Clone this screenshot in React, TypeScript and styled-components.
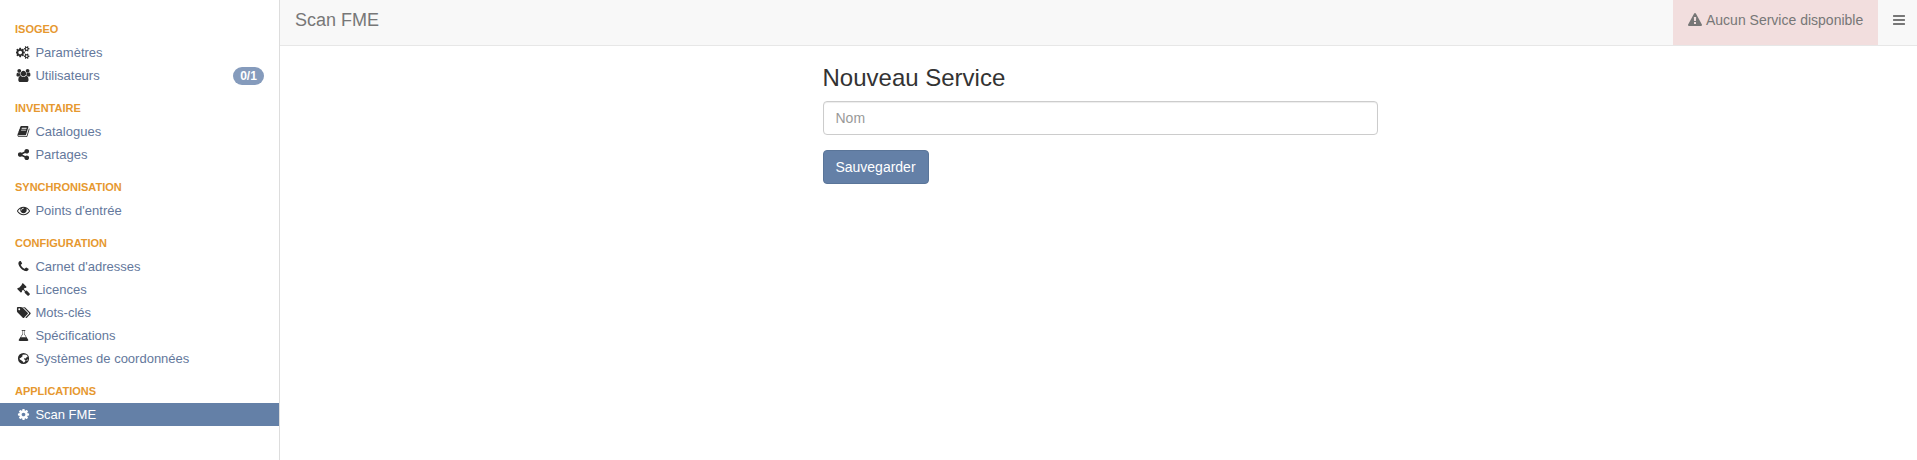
import React from "react";
import styled, { createGlobalStyle } from "styled-components";

const GlobalStyle = createGlobalStyle`
  *, *::before, *::after { box-sizing: border-box; }
  body {
    margin: 0;
    background: #fff;
    color: #333;
    font-family: "Liberation Sans", Arial, sans-serif;
    font-size: 14px;
    line-height: 20px;
  }
`;

const SMALL_GEAR =
  "v140q0 16-149 31-12 27-30 52 51 113 51 138 0 4-4 7-122 71-124 71-8 0-46-47t-52-68q-20 2-30 2t-30-2q-14 21-52 68t-46 47q-2 0-124-71-4-3-4-7 0-25 51-138-18-25-30-52-149-15-149-31v-140q0-16 149-31 13-29 30-52-51-113-51-138 0-4 4-7 4-2 35-20t59-34 30-16q8 0 46 46.5t52 67.5q20-2 30-2t30 2q51-71 92-112l6-2q4 0 124 70 4 3 4 7 0 25-51 138 17 23 30 52 149 15 149 31z";

const ICONS = {
  cogs: {
    width: 1920,
    d:
      "M832 896q0-106-75-181t-181-75-181 75-75 181 75 181 181 75 181-75 75-181zm768 512q0-52-38-90t-90-38-90 38-38 90q0 53 37.5 90.5t90.5 37.5 90.5-37.5 37.5-90.5zm0-1024q0-52-38-90t-90-38-90 38-38 90q0 53 37.5 90.5t90.5 37.5 90.5-37.5 37.5-90.5zm-384 421v185q0 10-7 19.5t-16 10.5l-155 24q-11 35-32 76 34 48 90 115 7 11 7 20 0 12-7 19-23 30-82.5 89.5t-78.5 59.5q-11 0-21-7l-115-90q-37 19-77 31-11 108-23 155-7 24-30 24h-186q-11 0-20-7.5t-10-17.5l-23-153q-34-10-75-31l-118 89q-7 7-20 7-11 0-21-8-144-133-144-160 0-9 7-19 10-14 41-53t47-61q-23-44-35-82l-152-24q-10-1-17-9.5t-7-19.5v-185q0-10 7-19.5t16-10.5l155-24q11-35 32-76-34-48-90-115-7-11-7-20 0-12 7-20 22-30 82-89t79-59q11 0 21 7l115 90q34-18 77-32 11-108 23-154 7-24 30-24h186q11 0 20 7.5t10 17.5l23 153q34 10 75 31l118-89q8-7 20-7 11 0 21 8 144 133 144 160 0 8-7 19-12 16-42 54t-45 60q23 48 34 82l152 23q10 2 17 10.5t7 19.5z" +
      "M1856 1338" + SMALL_GEAR + "M1856 314" + SMALL_GEAR,
  },
  users: {
    width: 2048,
    d: "M657 896q-162 5-265 128h-134q-82 0-138-40.5t-56-118.5q0-353 124-353 6 0 43.5 21t97.5 42.5 119 21.5q67 0 133-23-5 37-5 66 0 159 90 294zm1071 637q0 120-73 189.5t-194 69.5h-874q-121 0-194-69.5t-73-189.5q0-53 3.5-103.5t14-109 26.5-108.5 43-97.5 62-81 85.5-53.5 111.5-20q10 0 43 21.5t73 48 107 48 135 21.5 135-21.5 107-48 73-48 43-21.5q61 0 111.5 20t85.5 53.5 62 81 43 97.5 26.5 108.5 14 109 3.5 103.5zm-1024-1277q0 106-75 181t-181 75-181-75-75-181 75-181 181-75 181 75 75 181zm704 384q0 159-112.5 271.5t-271.5 112.5-271.5-112.5-112.5-271.5 112.5-271.5 271.5-112.5 271.5 112.5 112.5 271.5zm576 225q0 78-56 118.5t-138 40.5h-134q-103-123-265-128 90-135 90-294 0-29-5-66 66 23 133 23 59 0 119-21.5t97.5-42.5 43.5-21q124 0 124 353zm-128-609q0 106-75 181t-181 75-181-75-75-181 75-181 181-75 181 75 75 181z",
  },
  book: {
    width: 1792,
    d: "M1703 478q40 57 18 129l-275 906q-19 64-76.5 107.5t-122.5 43.5h-923q-77 0-148.5-53.5t-99.5-131.5q-24-67-2-127 0-4 3-27t4-37q1-8-3-21.5t-3-19.5q2-11 8-21t16.5-23.5 16.5-23.5q23-38 45-91.5t30-91.5q3-10 .5-30t-.5-28q3-11 17-28t17-23q21-36 42-92t25-90q1-9-2.5-32t.5-28q4-13 22-30.5t22-22.5q19-26 42.5-84.5t27.5-96.5q1-8-3-25.5t-2-26.5q2-8 9-18t18-23 17-21q8-12 16.5-30.5t15-35 16-36 19.5-32 26.5-23.5 36-11.5 47.5 5.5l-1 3q38-9 51-9h761q74 0 114 56t18 130l-274 906q-36 119-71.5 153.5t-128.5 34.5h-869q-27 0-38 15-11 16-1 43 24 70 144 70h923q29 0 56-15.5t35-41.5l300-987q7-22 5-57 38 15 59 43zm-1064 2q-4 13 2 22.5t20 9.5h608q13 0 25.5-9.5t16.5-22.5l21-64q4-13-2-22.5t-20-9.5h-608q-13 0-25.5 9.5t-16.5 22.5zm-83 256q-4 13 2 22.5t20 9.5h608q13 0 25.5-9.5t16.5-22.5l21-64q4-13-2-22.5t-20-9.5h-608q-13 0-25.5 9.5t-16.5 22.5z",
  },
  share: {
    width: 1792,
    d: "M1344 1024q133 0 226.5 93.5t93.5 226.5-93.5 226.5-226.5 93.5-226.5-93.5-93.5-226.5q0-12 2-34l-360-180q-92 86-218 86-133 0-226.5-93.5t-93.5-226.5 93.5-226.5 226.5-93.5q126 0 218 86l360-180q-2-22-2-34 0-133 93.5-226.5t226.5-93.5 226.5 93.5 93.5 226.5-93.5 226.5-226.5 93.5q-126 0-218-86l-360 180q2 22 2 34t-2 34l360 180q92-86 218-86z",
  },
  eye: {
    width: 1792,
    d: "M1664 960q-152-236-381-353 61 104 61 225 0 185-131.5 316.5t-316.5 131.5-316.5-131.5-131.5-316.5q0-121 61-225-229 117-381 353 133 205 333.5 326.5t434.5 121.5 434.5-121.5 333.5-326.5zm-720-384q0-20-14-34t-34-14q-125 0-214.5 89.5t-89.5 214.5q0 20 14 34t34 14 34-14 14-34q0-86 61-147t147-61q20 0 34-14t14-34zm848 384q0 34-20 69-140 230-376.5 368.5t-499.5 138.5-499.5-139-376.5-368q-20-35-20-69t20-69q140-229 376.5-368t499.5-139 499.5 139 376.5 368q20 35 20 69z",
  },
  phone: {
    width: 1792,
    d: "M1600 1240q0 27-10 70.5t-21 68.5q-21 50-122 106-94 51-186 51-27 0-53-3.5t-57.5-12.5-47-14.5-55.5-20.5-49-18q-98-35-175-83-127-79-264-216t-216-264q-48-77-83-175-3-9-18-49t-20.5-55.5-14.5-47-12.5-57.5-3.5-53q0-92 51-186 56-101 106-122 25-11 68.5-21t70.5-10q14 0 21 3 18 6 53 76 11 19 30 54t35 63.5 31 53.5q3 4 17.5 25t21.5 35.5 7 28.5q0 20-28.5 50t-62 55-62 53-28.5 46q0 9 5 22.5t8.5 20.5 14 24 11.5 19q76 137 174 235t235 174q2 1 19 11.5t24 14 20.5 8.5 22.5 5q18 0 46-28.5t53-62 55-62 50-28.5q14 0 28.5 7t35.5 21.5 25 17.5q25 15 53.5 31t63.5 35 54 30q70 35 76 53 3 7 3 21z",
  },
  gavel: {
    width: 1792,
    d: "M1771 1536q0 53-37 90l-107 108q-39 37-91 37-53 0-90-37l-363-364q-38-36-38-90 0-53 43-96l-256-256-126 126q-14 14-34 14t-34-14q2 2 12.5 12t12.5 13 10 11.5 10 13.5 6 13.5 5.5 16.5 1.5 18q0 38-28 68-3 3-16.5 18t-19 20.5-18.5 16.5-22 15.5-22 9-26 4.5q-40 0-68-28l-408-408q-28-28-28-68 0-13 4.5-26t9-22 15.5-22 16.5-18.5 20.5-19 18-16.5q30-28 68-28 10 0 18 1.5t16.5 5.5 13.5 6 13.5 10 11.5 10 13 12.5 12 12.5q-14-14-14-34t14-34l348-348q14-14 34-14t34 14q-2-2-12.5-12t-12.5-13-10-11.5-10-13.5-6-13.5-5.5-16.5-1.5-18q0-38 28-68 3-3 16.5-18t19-20.5 18.5-16.5 22-15.5 22-9 26-4.5q40 0 68 28l408 408q28 28 28 68 0 13-4.5 26t-9 22-15.5 22-16.5 18.5-20.5 19-18 16.5q-30 28-68 28-10 0-18-1.5t-16.5-5.5-13.5-6-13.5-10-11.5-10-13-12.5-12-12.5q14 14 14 34t-14 34l-126 126 256 256q43-43 96-43 52 0 91 37l363 363q37 39 37 91z",
  },
  tags: {
    width: 2048,
    d: "M576 448q0-53-37.5-90.5t-90.5-37.5-90.5 37.5-37.5 90.5 37.5 90.5 90.5 37.5 90.5-37.5 37.5-90.5zm1067 576q0 53-37 90l-491 492q-39 37-91 37-53 0-90-37l-715-716q-38-37-64.5-101t-26.5-117v-416q0-52 38-90t90-38h416q53 0 117 26.5t102 64.5l715 714q37 39 37 91zm384 0q0 53-37 90l-491 492q-39 37-91 37-36 0-59-14t-53-45l470-470q37-37 37-90 0-52-37-91l-715-714q-38-38-102-64.5t-117-26.5h224q53 0 117 26.5t102 64.5l715 714q37 39 37 91z",
  },
  flask: {
    width: 1792,
    d: "M1527 1447q56 89 21.5 153t-140.5 64h-1024q-106 0-140.5-64t21.5-153l503-793v-399h-64q-26 0-45-19t-19-45 19-45 45-19h384q26 0 45 19t19 45-19 45-45 19h-64v399zm-715-725l-272 430h712l-272-430-20-31v-436h-128v436z",
  },
  globe: {
    width: 1792,
    d: "M896 128a768 768 0 1 0 0 1536a768 768 0 1 0 0-1536zM960 330l170 60 90-30 190 120 60 130-80 120-130 20-50 130-170-30-90 90 60 100 150 70-20 150-130 150-110 70-60-140-130-90-120-130-180-70-70-130 90-110 130-20 60-110 120-60 40-120-80-90zM1380 1060l130-60-30 140-130 110-50-90z",
  },
  cog: {
    width: 1792,
    d: "M1152 896q0-106-75-181t-181-75-181 75-75 181 75 181 181 75 181-75 75-181zm512-109v222q0 12-8 23t-20 13l-185 28q-19 54-39 91 35 50 107 138 10 12 10 25t-9 23q-27 37-99 108t-94 71q-12 0-26-9l-138-108q-44 23-91 38-16 136-29 186-7 28-36 28h-222q-14 0-24.5-8.5t-11.5-21.5l-28-184q-49-16-90-37l-141 107q-10 9-25 9-14 0-25-11-126-114-165-168-7-10-7-23 0-12 8-23 15-21 51-66.5t54-70.5q-27-50-41-99l-183-27q-13-2-21-12.5t-8-23.5v-222q0-12 8-23t19-13l186-28q14-46 39-92-40-57-107-138-10-12-10-24 0-10 9-23 26-36 98.5-107.5t94.5-71.5q13 0 26 10l138 107q44-23 91-38 16-136 29-186 7-28 36-28h222q14 0 24.5 8.5t11.5 21.5l28 184q49 16 90 37l142-107q9-9 24-9 13 0 25 10 129 119 165 170 7 8 7 22 0 12-8 23-15 21-51 66.5t-54 70.5q26 50 41 98l183 28q13 2 21 12.5t8 23.5z",
  },
  warning: {
    width: 1792,
    d: "M1024 1375v-190q0-14-9.5-23.5t-22.5-9.5h-192q-13 0-22.5 9.5t-9.5 23.5v190q0 14 9.5 23.5t22.5 9.5h192q13 0 22.5-9.5t9.5-23.5zm-2-374l18-459q0-12-10-19-13-11-24-11h-220q-11 0-24 11-10 7-10 21l17 457q0 10 10 16.5t24 6.5h185q14 0 23.5-6.5t10.5-16.5zm-14-934l768 1408q35 63-2 126-17 29-46.5 46t-63.5 17h-1536q-34 0-63.5-17t-46.5-46q-37-63-2-126l768-1408q17-31 47-49t65-18 65 18 47 49z",
  },
  bars: {
    width: 1792,
    d: "M1664 1344v128q0 26-19 45t-45 19h-1408q-26 0-45-19t-19-45v-128q0-26 19-45t45-19h1408q26 0 45 19t19 45zm0-512v128q0 26-19 45t-45 19h-1408q-26 0-45-19t-19-45v-128q0-26 19-45t45-19h1408q26 0 45 19t19 45zm0-512v128q0 26-19 45t-45 19h-1408q-26 0-45-19t-19-45v-128q0-26 19-45t45-19h1408q26 0 45 19t19 45z",
  },
};

type IconName = keyof typeof ICONS;

const Svg = styled.svg`
  display: block;
  flex: none;
  fill: currentColor;
`;

function Icon({ name, size }: { name: IconName; size: number }) {
  const { width, d } = ICONS[name];
  return (
    <Svg
      width={(size * width) / 1792}
      height={size}
      viewBox={`0 0 ${width} 1792`}
      aria-hidden="true"
    >
      <path fillRule="evenodd" d={d} />
    </Svg>
  );
}

const Page = styled.div`
  display: flex;
  height: 460px;
  overflow: hidden;
`;

const Sidebar = styled.nav`
  flex: none;
  width: 280px;
  padding-top: 8px;
  border-right: 1px solid #ddd;
`;

const SectionTitle = styled.h2`
  height: 33px;
  margin: 0;
  padding: 13px 15px 0;
  color: #e6982f;
  font-size: 11px;
  font-weight: bold;
  line-height: 16px;
  text-transform: uppercase;
`;

const List = styled.ul`
  margin: 0;
  padding: 0;
  list-style: none;
`;

const Item = styled.li<{ $active?: boolean }>`
  display: flex;
  align-items: center;
  height: 23px;
  padding: 0 15px;
  background: ${(p) => (p.$active ? "#6480a7" : "transparent")};
  color: ${(p) => (p.$active ? "#fff" : "#2b2b2b")};
`;

const IconSlot = styled.span`
  display: flex;
  justify-content: center;
  flex: none;
  width: 16.7px;
  margin-right: 3.7px;
`;

const ItemLink = styled.a<{ $active?: boolean }>`
  flex: 1;
  color: ${(p) => (p.$active ? "#fff" : "#64789c")};
  font-size: 13px;
  line-height: 23px;
`;

const Badge = styled.span`
  min-width: 31px;
  height: 18px;
  margin-top: 1px;
  border-radius: 10px;
  background: #859bbc;
  color: #fff;
  font-size: 12px;
  font-weight: bold;
  line-height: 18px;
  text-align: center;
`;

const Content = styled.div`
  flex: 1;
  display: flex;
  flex-direction: column;
`;

const Header = styled.header`
  display: flex;
  height: 46px;
  border-bottom: 1px solid #e7e7e7;
  background: #f8f8f8;
  color: #777;
`;

const Title = styled.h1`
  flex: 1;
  margin: 0;
  padding: 10px 15px;
  font-size: 18px;
  font-weight: normal;
  line-height: 20px;
`;

const Alert = styled.div`
  display: flex;
  gap: 4px;
  width: 205px;
  padding: 10px 15px;
  background: #f2dede;
  white-space: nowrap;

  svg { margin-top: 3px; }
`;

const MenuButton = styled.button`
  display: flex;
  width: 39px;
  padding: 13px 14px;
  border: 0;
  background: none;
  color: #777;
`;

const Form = styled.form`
  width: 555px;
  margin: 18px 0 0 543px;
`;

const FormTitle = styled.h3`
  margin: 0 0 10px;
  font-size: 24px;
  font-weight: normal;
  line-height: 27px;
  text-indent: -0.5px;
`;

const Input = styled.input`
  display: block;
  width: 100%;
  height: 34px;
  margin-bottom: 15px;
  padding: 6px 11.5px;
  border: 1px solid #ccc;
  border-radius: 4px;
  box-shadow: inset 0 1px 1px rgba(0, 0, 0, 0.075);
  font: inherit;

  &::placeholder { color: #999; opacity: 1; }
`;

const SubmitButton = styled.button`
  display: block;
  width: 106px;
  height: 34px;
  padding: 6px 1px 6px 0;
  border: 1px solid #5a7599;
  border-radius: 4px;
  background: #6480a7;
  color: #fff;
  font: inherit;
`;

interface Entry {
  icon: IconName;
  label: string;
  badge?: string;
  active?: boolean;
}

const SECTIONS: { title: string; entries: Entry[] }[] = [
  {
    title: "Isogeo",
    entries: [
      { icon: "cogs", label: "Paramètres" },
      { icon: "users", label: "Utilisateurs", badge: "0/1" },
    ],
  },
  {
    title: "Inventaire",
    entries: [
      { icon: "book", label: "Catalogues" },
      { icon: "share", label: "Partages" },
    ],
  },
  { title: "Synchronisation", entries: [{ icon: "eye", label: "Points d'entrée" }] },
  {
    title: "Configuration",
    entries: [
      { icon: "phone", label: "Carnet d'adresses" },
      { icon: "gavel", label: "Licences" },
      { icon: "tags", label: "Mots-clés" },
      { icon: "flask", label: "Spécifications" },
      { icon: "globe", label: "Systèmes de coordonnées" },
    ],
  },
  { title: "Applications", entries: [{ icon: "cog", label: "Scan FME", active: true }] },
];

export default function App() {
  return (
    <>
      <GlobalStyle />
      <Page>
        <Sidebar>
          {SECTIONS.map((section) => (
            <section key={section.title}>
              <SectionTitle>{section.title}</SectionTitle>
              <List>
                {section.entries.map((entry) => (
                  <Item key={entry.label} $active={entry.active}>
                    <IconSlot>
                      <Icon name={entry.icon} size={13} />
                    </IconSlot>
                    <ItemLink $active={entry.active}>{entry.label}</ItemLink>
                    {entry.badge && <Badge>{entry.badge}</Badge>}
                  </Item>
                ))}
              </List>
            </section>
          ))}
        </Sidebar>
        <Content>
          <Header>
            <Title>Scan FME</Title>
            <Alert>
              <Icon name="warning" size={14} />
              Aucun Service disponible
            </Alert>
            <MenuButton type="button" aria-label="Menu">
              <Icon name="bars" size={14} />
            </MenuButton>
          </Header>
          <Form>
            <FormTitle>Nouveau Service</FormTitle>
            <Input placeholder="Nom" />
            <SubmitButton type="button">Sauvegarder</SubmitButton>
          </Form>
        </Content>
      </Page>
    </>
  );
}
